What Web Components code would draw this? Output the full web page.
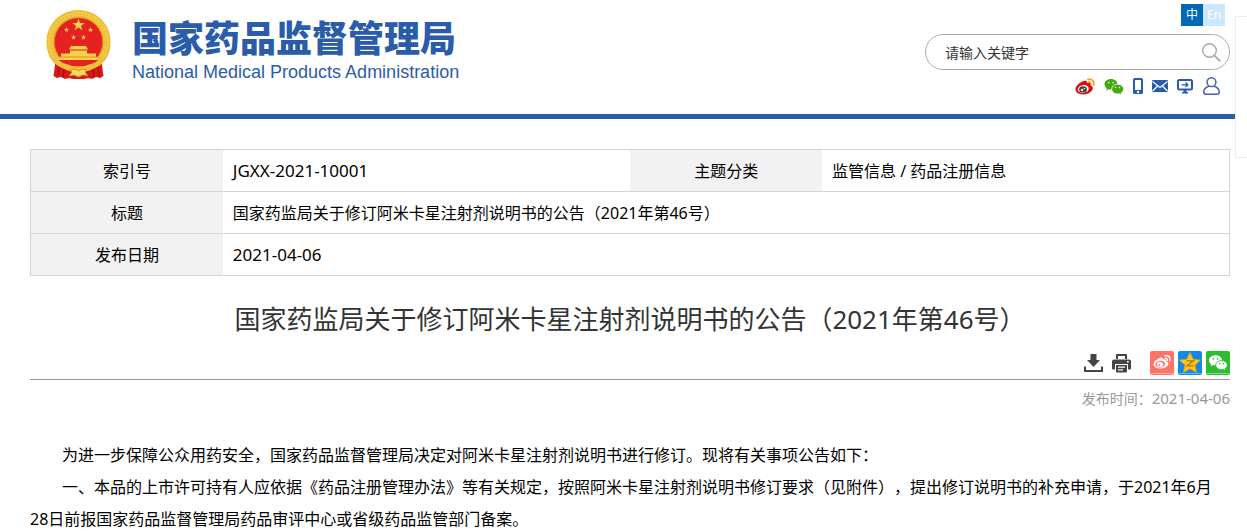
<!DOCTYPE html>
<html lang="zh-CN">
<head>
<meta charset="utf-8">
<meta name="viewport" content="width=device-width, initial-scale=1">
<title>国家药品监督管理局</title>
<style>
    html {
        scrollbar-width: none;
    }
    body {
        margin: 0;
        padding-right: 12px;
        font-family: "Noto Sans", "Noto Sans CJK SC", sans-serif;
        font-size: 16px;
        color: #000;
        background: #fff;
        text-spacing-trim: space-all;
        --brand: #2a5caa;
        --line: #d5d5d5;
    }
    main {
        display: block;
        padding: 30px 5px 0 30px;
    }
    .code {
        font-size: 17px;
    }
</style>
</head>
<body>
    <site-header>
        <site-brand slot="brand">
            <span slot="name">国家药品监督管理局</span>
            <span slot="english">National Medical Products Administration</span>
        </site-brand>
        <lang-switch slot="tools"></lang-switch>
        <search-box slot="tools" placeholder="请输入关键字"></search-box>
        <quick-links slot="tools"></quick-links>
    </site-header>

    <main>
        <record-info>
            <span slot="index" class="code">JGXX-2021-10001</span>
            <span slot="topic">监管信息 / 药品注册信息</span>
            <span slot="title">国家药监局关于修订阿米卡星注射剂说明书的公告（2021年第46号）</span>
            <span slot="date" class="code">2021-04-06</span>
        </record-info>
        <notice-article>
            <span slot="title">国家药监局关于修订阿米卡星注射剂说明书的公告（2021年第46号）</span>
            <span slot="date">2021-04-06</span>
            <p>为进一步保障公众用药安全，国家药品监督管理局决定对阿米卡星注射剂说明书进行修订。现将有关事项公告如下：</p>
            <p>一、本品的上市许可持有人应依据《药品注册管理办法》等有关规定，按照阿米卡星注射剂说明书修订要求（见附件），提出修订说明书的补充申请，于2021年6月28日前报国家药品监督管理局药品审评中心或省级药品监管部门备案。</p>
        </notice-article>
    </main>

    <side-panel></side-panel>

<script>
class BaseElement extends HTMLElement {
    constructor(){
        super();
        this.attachShadow({ mode: "open" });
    }
    connectedCallback(){
        if (this.shadowRoot.childNodes.length) return;
        const template = document.createElement('template');
        template.innerHTML = `<style>${this.getStyles()}</style>${this.getTemplate()}`;
        this.shadowRoot.appendChild(template.content.cloneNode(true));
    }
}

// name: [width, height, drawing]
const ICONS = {
    weibo: [20, 17, `
        <path fill="#e00b0b" d="M8 3.200c1.700-.8 3.600-.8 3.900.4.2.7 0 1.300-.1 1.700 2-.7 4.200-.7 4.400.9.1.6-.2 1.200-.3 1.500 1.600.6 2.100 1.500 1.900 2.900C17.300 14 13 16.500 8 16.500 3.500 16.500.5 14.300.5 11.300.5 8.300 4 4.700 8 3.200z"/>
        <ellipse cx="8.300" cy="11" rx="5.500" ry="3.900" fill="#fff" transform="rotate(-8 8.300 11)"/>
        <ellipse cx="8" cy="11.400" rx="3.900" ry="3.200" fill="#444"/>
        <circle cx="7" cy="12" r="1.300" fill="#ddd"/><circle cx="9.300" cy="10.500" r=".7" fill="#fff"/>
        <path fill="none" stroke="#efa51c" stroke-width="1.700" stroke-linecap="round" d="M13 1.300c4-.9 6.500 2 5.600 5.700M13.300 4c1.900-.3 2.900.8 2.500 2.500"/>`],
    wechat: [20, 17, `
        <path fill="#44a911" d="M7 1C3.300 1 .5 3.400.5 6.300c0 1.700.9 3.200 2.400 4.200l-.6 2.100 2.400-1.300c.7.2 1.500.3 2.300.3 3.600 0 6.500-2.400 6.500-5.300S10.600 1 7 1z"/>
        <path fill="#44a911" stroke="#fff" stroke-width=".8" d="M13.700 6.200c-3.300 0-6 2.200-6 4.900s2.700 4.900 6 4.900c.7 0 1.400-.1 2-.3l2.200 1.100-.6-1.900c1.400-.9 2.300-2.200 2.300-3.800 0-2.700-2.600-4.900-5.900-4.900z"/>
        <g fill="#fff"><circle cx="4.800" cy="4.700" r=".8"/><circle cx="9" cy="4.700" r=".8"/><circle cx="11.600" cy="9.500" r=".7"/><circle cx="15.500" cy="9.500" r=".7"/></g>`],
    phone: [10, 16, `
        <path fill="#2a5caa" fill-rule="evenodd" d="M1.500 0h7A1.500 1.500 0 0 1 10 1.500v13A1.500 1.500 0 0 1 8.500 16h-7A1.500 1.500 0 0 1 0 14.500v-13A1.500 1.500 0 0 1 1.500 0zM2 2v10h6V2zM4 13v2h2v-2z"/>`],
    mail: [16, 12, `
        <rect width="16" height="12" rx="1" fill="#2a5caa"/>
        <path fill="none" stroke="#fff" stroke-width="1.200" d="M.5 1.500 8 7.500l7.500-6M.5 11l5.200-5M15.500 11l-5.200-5"/>`],
    monitor: [16, 15, `
        <rect x="1" y="1" width="14" height="9.500" rx="1.500" fill="none" stroke="#2a5caa" stroke-width="2"/>
        <path fill="#2a5caa" d="M6.500 11h3v2H11v1.500H5V13h1.500z"/>
        <path fill="none" stroke="#2a5caa" stroke-width="1.200" d="M4.500 5.800h6.300M8.500 3.500l2.400 2.300L8.500 8"/>`],
    user: [17, 18, `
        <g fill="none" stroke="#4460a8" stroke-width="1.500"><circle cx="8.500" cy="5.200" r="4.400"/><path d="M6 9.200C3 10 .8 12.200.8 15c0 1.600.7 2.200 2 2.200h11.400c1.300 0 2-.6 2-2.200 0-2.800-2.200-5-5.200-5.800"/></g>`],
    search: [19, 19, `
        <g fill="none" stroke="#aaa"><circle cx="7.500" cy="7.500" r="6.800" stroke-width="1.400"/><path stroke-width="1.800" d="m12.300 12.300 6 6"/></g>`],
    download: [19, 18, `
        <path fill="#444" d="M6.500 0h6v6H16l-6.500 7L3 6h3.500z"/>
        <path fill="none" stroke="#444" stroke-width="2" d="M1 12.500V17h17v-4.500"/>`],
    print: [19, 19, `
        <path fill="#444" fill-rule="evenodd" d="M5 0h9a1 1 0 0 1 1 1v4h-2V2H6v3H4V1a1 1 0 0 1 1-1zM2 5.500h15a2 2 0 0 1 2 2v7a1 1 0 0 1-1 1h-2V10H3v5.500H1a1 1 0 0 1-1-1v-7a2 2 0 0 1 2-2zM15 7v1.500h1.700V7z"/>
        <path fill="#444" fill-rule="evenodd" d="M4 11h11v6.500a1 1 0 0 1-1 1H5a1 1 0 0 1-1-1zM6 12.500v1.200h7v-1.200zM6 15.200v1.200h5v-1.200z"/>`],
    shareWeibo: [24, 24, `
        <rect width="24" height="24" rx="2" fill="#fa7469"/><path d="M1 22.500h22" stroke="#ffa8a0"/>
        <path fill="#fff" d="M9.800 7c1.800-.8 3.500-.4 3 1.600 2.200-.8 4.300-.3 3.600 1.800 1.500.5 2.300 1.300 2 2.700-.5 2.600-4 4.500-8 4.500-3.900 0-6.800-1.800-6.800-4.300C3.600 10.900 6.500 8.200 9.800 7z"/>
        <ellipse cx="10.300" cy="13.200" rx="4.900" ry="3.300" fill="#fa7469" transform="rotate(-8 10.300 13.200)"/>
        <ellipse cx="10" cy="13.500" rx="3.100" ry="2.500" fill="#fff"/><circle cx="9.300" cy="14" r="1" fill="#fa7469"/>
        <path fill="none" stroke="#fff" stroke-width="1.400" stroke-linecap="round" d="M15 4.800c3.500-.7 5.700 1.800 4.900 5M15.200 7.300c1.600-.2 2.500.7 2.200 2.100"/>`],
    shareQzone: [24, 24, `
        <rect width="24" height="24" rx="2" fill="#0e8bea"/><path d="M1 22.500h22" stroke="#69b9f5"/>
        <path fill="#ffca20" stroke="#ee9a00" stroke-width=".8" stroke-linejoin="round" d="m12 1.500 3.100 6.800 7.400.8-5.500 5 1.500 7.300-6.500-3.700-6.500 3.700L7 14.100l-5.500-5 7.400-.8z"/>
        <path fill="none" stroke="#b87400" stroke-width="1.300" d="M8.500 9.800h7l-6.500 5h6.500"/>`],
    shareWechat: [24, 24, `
        <rect width="24" height="24" rx="2" fill="#2fbc35"/><path d="M1 22.500h22" stroke="#85d989"/>
        <path fill="#fff" d="M9.500 4.300c-3.700 0-6.500 2.200-6.500 5 0 1.600.8 3 2.300 3.900l-.5 2 2.300-1.200c.8.200 1.500.300 2.400.300 3.600 0 6.400-2.200 6.400-5s-2.800-5-6.400-5z"/>
        <path fill="#fff" stroke="#2fbc35" stroke-width=".9" d="M15.500 9.600c-3.300 0-5.800 2-5.800 4.500s2.500 4.600 5.800 4.600c.7 0 1.400-.1 2-.3l2.200 1.200-.6-1.900c1.400-.8 2.200-2.100 2.200-3.600 0-2.500-2.500-4.500-5.800-4.500z"/>
        <g fill="#2fbc35"><circle cx="7.400" cy="7.800" r=".9"/><circle cx="11.500" cy="7.800" r=".9"/><circle cx="13.600" cy="12.700" r=".8"/><circle cx="17.300" cy="12.700" r=".8"/></g>`]
};

class UiIcon extends BaseElement {
    getTemplate(){
        const [width, height, drawing] = ICONS[this.getAttribute('name')];
        return `<svg width="${width}" height="${height}" viewBox="0 0 ${width} ${height}" aria-hidden="true">${drawing}</svg>`;
    }
    getStyles(){
        return `
            :host { display: inline-flex; }
            svg { display: block; }
        `;
    }
}

class SiteHeader extends BaseElement {
    getTemplate(){
        return `
            <header>
                <slot name="brand"></slot>
                <div class="tools"><slot name="tools"></slot></div>
            </header>
        `;
    }
    getStyles(){
        return `
            :host { display: block; }
            header {
                display: flex;
                justify-content: space-between;
                align-items: flex-start;
                height: 114px;
                padding: 0 5px 0 46px;
                border-bottom: 5px solid var(--brand);
            }
            .tools {
                display: flex;
                flex-direction: column;
                align-items: flex-end;
                gap: 8px;
                padding-top: 4px;
            }
        `;
    }
}

class SiteBrand extends BaseElement {
    getTemplate(){
        return `
            <svg width="65" height="70" viewBox="0 0 65 70" aria-hidden="true">
                <path fill="#d9181b" d="M10 48 7.500 66l3.500 2 4-1 4 2 4-1 4 1h11l4-1 4 1 4-2 4 1 3.500-2L55 48z"/>
                <path fill="none" stroke="#98100f" stroke-width="1.200" d="m13 57-1 9M18 60l-1 7M52 57l1 9M47 60l1 7"/>
                <path fill="#edbb36" d="M32.500 0C14.500 0 .5 14 .5 32c0 11 4 18 10 23 7 4 13 6 22 6s15-2 22-6c6-5 10-12 10-23C64.500 14 50.500 0 32.500 0z"/>
                <circle cx="32.500" cy="32" r="28.500" fill="none" stroke="#f3cb48" stroke-width="4"/>
                <circle cx="32.500" cy="32" r="28" fill="none" stroke="#e0a527" stroke-width="1" stroke-dasharray="1.500 2"/>
                <circle cx="32.500" cy="32" r="24.300" fill="#e42320" stroke="#cf951f" stroke-width=".8"/>
                <g fill="#f7cf4a">
                    <path d="m32.500 8.500 1.500 4.500h4.800L35 15.800l1.400 4.500-3.900-2.700-3.900 2.700 1.400-4.500-3.800-2.800H31z"/>
                    <path id="star" d="m20.500 17 .7 1.900h2l-1.600 1.200.6 2-1.700-1.200-1.700 1.200.6-2-1.600-1.200h2z"/>
                    <use href="#star" x="24"/><use href="#star" x="7" y="7.500"/><use href="#star" x="17" y="7.500"/>
                    <path d="M25 36h15l2 3.500H23zM24 40.500h17v3h9v3l2 1.500v2H13v-2l2-1.500v-3h9z"/>
                </g>
                <path stroke="#c98a1b" stroke-width=".8" d="M14 47h37M24 40h17"/>
                <path fill="#e42320" d="M12 50h41l-9 6H21z"/>
                <path fill="#f0c03a" d="M9 46c6 9 15 8 19 11l4.500 2 4.500-2c4-3 13-2 19-11l2 5c-7 8-14 7-19 10H26C21 58 14 59 7 51z"/>
                <path fill="#d9181b" d="m20 61 6 2-3 4-5-1zM45 61l-6 2 3 4 5-1z"/>
                <path fill="#f7da62" stroke="#c98a1b" stroke-width=".8" d="m24 60 5-1 3.500 2 3.500-2 5 1-2 2 3 4-5-1-4.500 2-4.500-2-5 1 3-4z"/>
            </svg>
            <div class="names">
                <div class="name"><slot name="name"></slot></div>
                <div class="english"><slot name="english"></slot></div>
            </div>
        `;
    }
    getStyles(){
        return `
            :host {
                display: flex;
                gap: 21px;
                padding-top: 10px;
                color: var(--brand);
            }
            .names { padding-top: 4px; white-space: nowrap; }
            .name {
                font: 900 36px/44px "Noto Sans CJK SC", sans-serif;
            }
            .english {
                font: 18px/28px "Liberation Sans", sans-serif;
            }
        `;
    }
}

class LangSwitch extends BaseElement {
    getTemplate(){
        return `<nav aria-label="语言"><a class="on" href="#zh">中</a><a href="#en">En</a></nav>`;
    }
    getStyles(){
        return `
            :host { display: block; padding-right: 5px; }
            nav { display: flex; }
            a {
                width: 22px;
                font-size: 12px;
                line-height: 22px;
                text-align: center;
                color: #fff;
                background: #cce8ff;
                text-decoration: none;
            }
            .on { background: #0068b7; }
        `;
    }
}

class SearchBox extends BaseElement {
    getTemplate(){
        const text = this.getAttribute('placeholder');
        return `
            <form role="search">
                <input type="text" aria-label="${text}" placeholder="${text}">
                <button type="button" aria-label="搜索"><ui-icon name="search"></ui-icon></button>
            </form>
        `;
    }
    getStyles(){
        return `
            :host { display: block; }
            form {
                box-sizing: border-box;
                display: flex;
                align-items: center;
                width: 305px;
                height: 36px;
                margin: 0;
                padding: 0 8px 0 19px;
                border: 1px solid #aaa;
                border-radius: 18px;
            }
            input {
                flex: 1;
                min-width: 0;
                padding: 0;
                border: 0;
                outline: 0;
                font: inherit;
                font-size: 14px;
                background: none;
            }
            input::placeholder { color: #333; opacity: 1; }
            button { display: flex; padding: 0; border: 0; background: none; cursor: pointer; }
        `;
    }
}

class QuickLinks extends BaseElement {
    getTemplate(){
        const links = [
            ['weibo', '微博'], ['wechat', '微信'], ['phone', '手机版'],
            ['mail', '邮箱'], ['monitor', '网上办事'], ['user', '登录']
        ];
        return `<nav aria-label="快捷入口">${links.map(([name, label]) =>
            `<a href="#${name}" aria-label="${label}"><ui-icon name="${name}"></ui-icon></a>`).join('')}</nav>`;
    }
    getStyles(){
        return `
            :host { display: block; margin-top: -1px; padding-right: 10px; }
            nav { display: flex; align-items: center; gap: 9px; }
            a { display: flex; }
            a:last-child { padding-left: 1px; }
        `;
    }
}

class RecordInfo extends BaseElement {
    getTemplate(){
        return `
            <table>
                <tr>
                    <th scope="row">索引号</th><td><slot name="index"></slot></td>
                    <th scope="row">主题分类</th><td><slot name="topic"></slot></td>
                </tr>
                <tr><th scope="row">标题</th><td colspan="3"><slot name="title"></slot></td></tr>
                <tr><th scope="row">发布日期</th><td colspan="3"><slot name="date"></slot></td></tr>
            </table>
        `;
    }
    getStyles(){
        return `
            :host { display: block; }
            table {
                width: 100%;
                table-layout: fixed;
                border-collapse: collapse;
                border: 1px solid var(--line);
            }
            tr { border-bottom: 1px solid var(--line); }
            th, td {
                height: 41px;
                padding: 0;
                line-height: 24px;
                font-weight: normal;
            }
            th { width: 16%; background: #f2f2f2; }
            td { padding-left: 10px; text-align: left; }
        `;
    }
}

class NoticeArticle extends BaseElement {
    getTemplate(){
        return `
            <article>
                <h1><slot name="title"></slot></h1>
                <div class="bar">
                    <button type="button" aria-label="下载"><ui-icon name="download"></ui-icon></button>
                    <button type="button" aria-label="打印"><ui-icon name="print"></ui-icon></button>
                    <div class="share">
                        <a href="#weibo" aria-label="分享到微博"><ui-icon name="shareWeibo"></ui-icon></a>
                        <a href="#qzone" aria-label="分享到QQ空间"><ui-icon name="shareQzone"></ui-icon></a>
                        <a href="#wechat" aria-label="分享到微信"><ui-icon name="shareWechat"></ui-icon></a>
                    </div>
                </div>
                <div class="time">发布时间：<span class="date"><slot name="date"></slot></span></div>
                <slot></slot>
            </article>
        `;
    }
    getStyles(){
        return `
            :host { display: block; }
            h1 {
                margin: 23px 0 0;
                font-size: 26px;
                font-weight: normal;
                line-height: 40px;
                text-align: center;
                color: #333;
            }
            .bar {
                display: flex;
                justify-content: flex-end;
                align-items: center;
                gap: 9px;
                padding: 12px 0 4px;
                border-bottom: 1px solid #999;
            }
            .bar button { display: flex; padding: 0; border: 0; background: none; cursor: pointer; }
            .share { display: flex; gap: 4px; padding-left: 10px; }
            .share a { display: flex; }
            .time {
                padding: 6px 0 28px;
                font-size: 14px;
                line-height: 24px;
                text-align: right;
                color: #999;
            }
            .date { font-size: 15px; }
            ::slotted(p) {
                margin: 0;
                line-height: 32px;
                text-indent: 32px;
            }
        `;
    }
}

// empty floating panel at the right edge of the window
class SidePanel extends BaseElement {
    getTemplate(){
        return `<aside></aside>`;
    }
    getStyles(){
        return `
            :host {
                position: absolute;
                top: 16px;
                right: 0;
            }
            aside {
                box-sizing: border-box;
                width: 12px;
                height: 142px;
                border: 1px solid #eee;
                border-right: 0;
                background: #fff;
            }
        `;
    }
}

customElements.define('ui-icon', UiIcon);
customElements.define('site-header', SiteHeader);
customElements.define('site-brand', SiteBrand);
customElements.define('lang-switch', LangSwitch);
customElements.define('search-box', SearchBox);
customElements.define('quick-links', QuickLinks);
customElements.define('record-info', RecordInfo);
customElements.define('notice-article', NoticeArticle);
customElements.define('side-panel', SidePanel);
</script>
</body>
</html>
